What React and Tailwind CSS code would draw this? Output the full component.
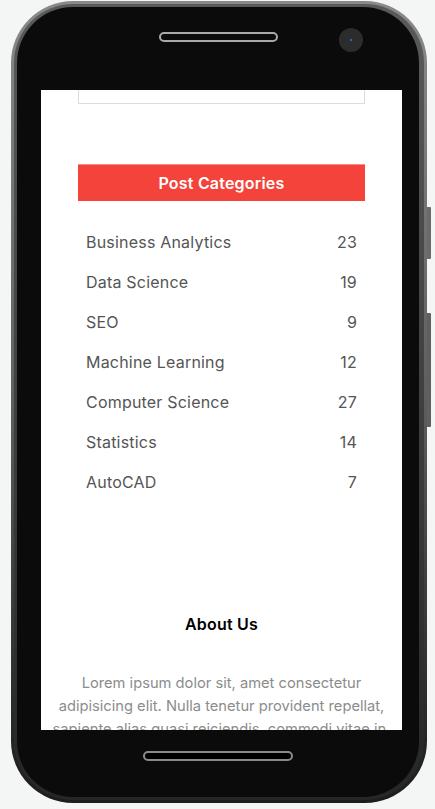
import React from "react";

const cats = [
  ["Business Analytics", 23],
  ["Data Science", 19],
  ["SEO", 9],
  ["Machine Learning", 12],
  ["Computer Science", 27],
  ["Statistics", 14],
  ["AutoCAD", 7],
];

export default function App() {
  return (
    <div className="w-[435px] h-[809px] bg-[#f4f6f6] overflow-hidden pt-[1px] pl-[11px]" style={{ fontFamily: "Inter, 'Noto Sans', sans-serif" }}>
      <div className="relative w-[416px] h-[802px] rounded-[62px] bg-gradient-to-b from-[#8a8a8a] via-[#5e5e5e] to-[#1c1c1c] p-[3px]">
        <div className="absolute left-[416px] top-[206px] w-[4px] h-[52px] bg-[#6a6a6a] rounded-r-[1px]" />
        <div className="absolute left-[416px] top-[312px] w-[4px] h-[114px] bg-[#5f5f5f] rounded-r-[1px]" />
        <div className="w-full h-full rounded-[59px] bg-gradient-to-b from-[#5a5a5a] to-[#262626] pl-[3px] pr-[5px] pt-[3px] pb-[3px]">
          <div className="w-full h-full rounded-[56px] bg-[#0b0b0b] flex flex-col">
            <div className="h-[83px] relative shrink-0">
              <div className="absolute left-[142px] top-[25px] w-[119px] h-[10px] rounded-full border-2 border-[#a9a9a9] bg-[#0b0b0b]" />
              <div className="absolute left-[322px] top-[21px] w-[24px] h-[24px] rounded-full bg-[#2c2c2c] flex items-center justify-center">
                <div className="w-[2px] h-[2px] rounded-full bg-[#2a7fd0]" />
              </div>
            </div>
            <div className="ml-[24px] w-[361px] h-[640px] bg-white overflow-hidden shrink-0 flex flex-col">
              <div className="mx-[37px] h-[14px] border border-t-0 border-[#dcdcdc] shrink-0" />
              <div className="mx-[37px] mt-[60px] h-[37px] shrink-0 bg-[#f4433a] border-t border-[#f98a84] flex items-center justify-center text-white font-semibold text-[16px] tracking-[0.2px]">
                Post Categories
              </div>
              <div className="mx-[37px] mt-[21px] px-[8px] flex flex-col shrink-0">
                {cats.map(([name, n]) => (
                  <div key={name} className="h-[40px] shrink-0 flex items-center justify-between text-[16px] text-[#555555] tracking-[0.2px]">
                    <span>{name}</span>
                    <span>{n}</span>
                  </div>
                ))}
              </div>
              <div className="mt-[110px] h-[24px] shrink-0 flex items-center justify-center text-[16px] font-semibold text-black tracking-[0.2px]">
                About Us
              </div>
              <p className="mt-[36px] shrink-0 px-[6px] text-center text-[14.7px] leading-[23px] text-[#8c8c8c]">
                Lorem ipsum dolor sit, amet consectetur adipisicing elit. Nulla tenetur provident repellat, sapiente alias quasi reiciendis, commodi vitae in.
              </p>
            </div>
            <div className="relative flex-1">
              <div className="absolute left-[126px] top-[21px] w-[150px] h-[10px] rounded-full border-2 border-[#8a8a8a] bg-black" />
            </div>
          </div>
        </div>
      </div>
    </div>
  );
}
